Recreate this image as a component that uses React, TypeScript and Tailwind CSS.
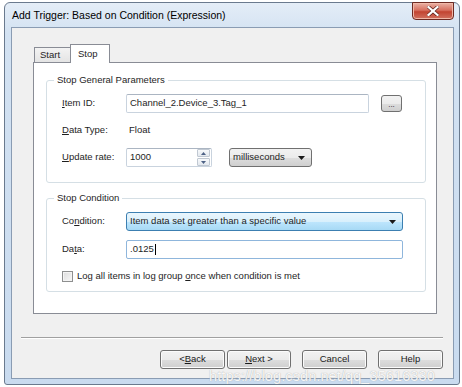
import React from "react";

const U = ({ children }: { children: React.ReactNode }) => <span className="underline underline-offset-[1px]">{children}</span>;

function Btn({ w, children }: { w: string; children: React.ReactNode }) {
  return (
    <div className={`${w} h-[19px] flex items-center justify-center rounded-[3px] border border-[#707070] bg-[linear-gradient(#f2f2f2_0%,#ebebeb_50%,#dddddd_51%,#cfcfcf_100%)] text-[#1a1a1a] shadow-[inset_0_0_0_1px_#fbfbfb]`}>
      {children}
    </div>
  );
}

function Arrow() {
  return (
    <svg width="7" height="4" viewBox="0 0 7 4"><path d="M0 0h7L3.5 4z" fill="#1a1a1a" /></svg>
  );
}

export default function App() {
  return (
    <div className="w-[462px] h-[387px] bg-white relative overflow-hidden font-['Liberation_Sans',Arial,sans-serif] text-[9.5px] text-[#1e1e1e]">
      <div className="ml-[4px] mt-[2px] w-[456px] h-[383px] border border-[#6a7a8e] rounded-t-[6px] rounded-b-[3px] bg-[linear-gradient(#e4edf7,#d3e2f2_30px,#c9dbef)] flex flex-col">
        {/* title bar */}
        <div className="h-[24px] flex items-start justify-between">
          <div className="pl-[7px] pt-[6px] text-[10.5px] text-black leading-[13px]">Add Trigger: Based on Condition (Expression)</div>
          <div className="mr-[5px] -mt-px w-[42px] h-[18px] rounded-b-[4px] border border-[#6e2a22] bg-[linear-gradient(#eab1a4,#d7705f_45%,#c24431_55%,#d2715f)] flex items-center justify-center shadow-[inset_0_0_0_1px_#f0b8a8]">
            <svg width="12" height="10" viewBox="0 0 12 10">
              <path d="M1.5 1 L10.5 9 M10.5 1 L1.5 9" stroke="#5a2019" strokeWidth="3.6" strokeLinecap="square" />
              <path d="M1.5 1 L10.5 9 M10.5 1 L1.5 9" stroke="#ffffff" strokeWidth="2.2" strokeLinecap="square" />
            </svg>
          </div>
        </div>
        {/* client */}
        <div className="ml-[6px] w-[443px] h-[352px] border border-[#8a9cb3] bg-[#f0f0f0] flex flex-col">
          <div className="pl-[21px] pt-[16px]">
            {/* tabs */}
            <div className="flex items-end h-[18px] pl-[1px]">
              <div className="w-[37px] h-[15px] border border-b-0 border-[#898c95] bg-[linear-gradient(#f3f3f3,#e4e4e4)] flex items-center pl-[5px] -mr-[1px]">Start</div>
              <div className="w-[40px] h-[19px] -mb-px border border-b-0 border-[#898c95] bg-white flex items-start pt-[2px] pl-[7px] relative z-10">Stop</div>
            </div>
            {/* panel */}
            <div className="w-[404px] h-[252px] border border-[#898c95] bg-white pl-[12px] pr-[9px] pt-[11px]">
              <fieldset className="border border-[#d5dfe5] rounded-[3px] px-[15px] pb-[15px] w-[380px]">
                <legend className="ml-[-8px] px-[3px] leading-[12px] h-[12px]">Stop General Parameters</legend>
                <div className="pt-[8px] flex flex-col">
                  <div className="h-[19px] flex items-center">
                    <div className="w-[64px]"><U>I</U>tem ID:</div>
                    <div className="w-[243px] h-[19px] border border-[#c9d3de] border-t-[#abb5c2] rounded-[2px] flex items-center pl-[3px]">Channel_2.Device_3.Tag_1</div>
                    <div className="ml-[12px] w-[21px] h-[17px] rounded-[3px] border border-[#707070] bg-[linear-gradient(#f2f2f2_0%,#ebebeb_50%,#dddddd_51%,#cfcfcf_100%)] flex items-center justify-center text-[8px] leading-[8px] pt-[2px]">...</div>
                  </div>
                  <div className="mt-[8px] h-[19px] flex items-center">
                    <div className="w-[64px]"><U>D</U>ata Type:</div>
                    <div className="pl-[3px]">Float</div>
                  </div>
                  <div className="mt-[8px] h-[19px] flex items-center">
                    <div className="w-[64px]"><U>U</U>pdate rate:</div>
                    <div className="w-[86px] h-[19px] border border-[#c9d3de] border-t-[#abb5c2] rounded-[2px] flex items-center">
                      <div className="flex-1 pl-[3px]">1000</div>
                      <div className="w-[14px] h-[17px] flex flex-col gap-[1px] pr-[1px]">
                        <div className="flex-1 rounded-[1px] border border-[#c0c8d2] bg-[linear-gradient(#f7f9fb,#e3e8ee)] flex items-center justify-center">
                          <svg width="5" height="3" viewBox="0 0 5 3"><path d="M0 3h5L2.5 0z" fill="#4d6185" /></svg>
                        </div>
                        <div className="flex-1 rounded-[1px] border border-[#c0c8d2] bg-[linear-gradient(#f7f9fb,#e3e8ee)] flex items-center justify-center">
                          <svg width="5" height="3" viewBox="0 0 5 3"><path d="M0 0h5L2.5 3z" fill="#4d6185" /></svg>
                        </div>
                      </div>
                    </div>
                    <div className="ml-[17px] w-[83px] h-[19px] rounded-[3px] border border-[#707070] bg-[linear-gradient(#f2f2f2_0%,#ebebeb_50%,#dddddd_51%,#cfcfcf_100%)] flex items-center justify-between pl-[3px] pr-[6px]">
                      <span>milliseconds</span>
                      <Arrow />
                    </div>
                  </div>
                </div>
              </fieldset>
              <fieldset className="mt-[9px] border border-[#d5dfe5] rounded-[3px] px-[15px] pb-[8px] w-[380px]">
                <legend className="ml-[-8px] px-[3px] leading-[12px] h-[12px]">Stop Condition</legend>
                <div className="pt-[8px] flex flex-col">
                  <div className="h-[19px] flex items-center">
                    <div className="w-[64px]">Co<U>n</U>dition:</div>
                    <div className="w-[277px] h-[19px] rounded-[3px] border border-[#3c7fb1] bg-[linear-gradient(#eaf6fd_0%,#d9f0fc_50%,#bee6fd_51%,#a7d9f5_100%)] flex items-center justify-between pl-[3px] pr-[6px]">
                      <span>Item data set greater than a specific value</span>
                      <Arrow />
                    </div>
                  </div>
                  <div className="mt-[9px] h-[19px] flex items-center">
                    <div className="w-[64px]">Da<U>t</U>a:</div>
                    <div className="w-[277px] h-[19px] border border-[#8fb6dc] rounded-[2px] flex items-center pl-[3px]">
                      <span>.0125</span><span className="ml-[1px] w-px h-[11px] bg-black" />
                    </div>
                  </div>
                  <div className="mt-[11px] h-[13px] flex items-center">
                    <div className="w-[11px] h-[11px] border border-[#8e8f8f] bg-[linear-gradient(135deg,#dcdcdc,#f7f7f7)] shadow-[inset_0_0_0_1px_#f4f4f4]" />
                    <div className="ml-[4px]">Log all items in log group <U>o</U>nce when condition is met</div>
                  </div>
                </div>
              </fieldset>
            </div>
          </div>
          {/* separator */}
          <div className="mt-[23px] ml-[9px] mr-[10px] h-[2px] border-t border-t-[#a0a0a0] border-b border-b-white" />
          {/* buttons */}
          <div className="mt-[11px] flex justify-end pr-[10px]">
            <Btn w="w-[65px]">&lt; <U>B</U>ack</Btn>
            <div className="ml-[2px]"><Btn w="w-[64px]"><U>N</U>ext &gt;</Btn></div>
            <div className="ml-[11px]"><Btn w="w-[65px]">Cancel</Btn></div>
            <div className="ml-[11px]"><Btn w="w-[65px]">Help</Btn></div>
          </div>
        </div>
      </div>
      <div className="absolute left-[209px] top-[368px] text-[14.5px] leading-[17px] text-white/90 [text-shadow:0_0_1px_#9a9a9a] tracking-[0.1px]">https://blog.csdn.net/qq_35616330</div>
    </div>
  );
}
